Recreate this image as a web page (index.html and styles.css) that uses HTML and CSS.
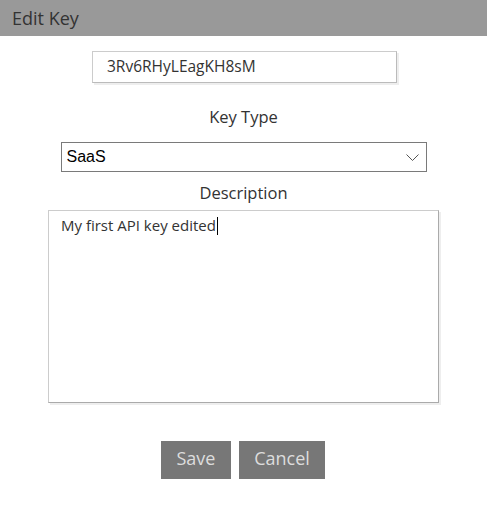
FILE: index.html
```html
<!DOCTYPE html>
<html>
<head>
<meta charset="utf-8">
<link rel="stylesheet" href="styles.css">
</head>
<body>
<div class="header"><span class="title">Edit Key</span></div>
<div class="form">
  <div class="keybox">3Rv6RHyLEagKH8sM</div>
  <div class="label label-type">Key Type</div>
  <div class="select">
    <span class="select-text">SaaS</span>
    <svg class="chev" width="13" height="7" viewBox="0 0 13 7"><path d="M0.5 0.5 L6.5 6.5 L12.5 0.5" fill="none" stroke="#555" stroke-width="1"/></svg>
  </div>
  <div class="label label-desc">Description</div>
  <div class="textarea"><span class="ta-text">My first API key edited</span><span class="caret"></span></div>
  <div class="buttons">
    <div class="btn btn-save">Save</div>
    <div class="btn btn-cancel">Cancel</div>
  </div>
</div>
</body>
</html>
```
FILE: styles.css
```css
html, body {
  margin: 0;
  padding: 0;
  background: #fff;
  font-family: "Open Sans", "Noto Sans", sans-serif;
  color: #333;
}
.header {
  height: 36px;
  background: #999;
  display: flex;
  align-items: center;
  padding-left: 12px;
}
.title {
  font-size: 18px;
  color: #333;
}
.form {
  display: flex;
  flex-direction: column;
  align-items: center;
}
.keybox {
  margin-top: 15px;
  margin-left: 2px;
  width: 305px;
  height: 32px;
  box-sizing: border-box;
  border: 1px solid #ccc;
  border-right-color: #bbb;
  border-bottom-color: #bbb;
  box-shadow: 2px 2px 0 #eee;
  font-size: 15.5px;
  line-height: 28px;
  padding-left: 14px;
}
.label {
  font-size: 16.5px;
  color: #333;
  text-align: center;
}
.label-type {
  margin-top: 23px;
  line-height: 22px;
}
.select {
  margin-top: 14px;
  width: 366px;
  height: 30px;
  box-sizing: border-box;
  border: 1px solid #7a7a7a;
  display: flex;
  align-items: center;
  justify-content: space-between;
  padding: 0 7px 0 5px;
}
.select-text {
  font-family: "Liberation Sans", Arial, sans-serif;
  font-size: 16px;
  color: #000;
}
.chev { display: block; }
.label-desc {
  margin-top: 10px;
  line-height: 22px;
}
.textarea {
  margin-top: 6px;
  width: 391px;
  height: 193px;
  box-sizing: border-box;
  border: 1px solid #ccc;
  border-right-color: #aaa;
  border-bottom-color: #aaa;
  box-shadow: 2px 2px 0 #eee;
  padding: 3px 12px;
  font-size: 15px;
  line-height: 22px;
  display: flex;
  align-items: flex-start;
}
.caret {
  display: inline-block;
  width: 1px;
  height: 18px;
  background: #000;
  margin-top: 3px;
  margin-left: 1px;
}
.buttons {
  margin-top: 38px;
  margin-right: 1px;
  display: flex;
  gap: 8px;
}
.btn {
  height: 38px;
  background: #777;
  color: #ddd;
  font-size: 18px;
  line-height: 35px;
  text-align: center;
}
.btn-save { width: 70px; }
.btn-cancel { width: 86px; }
```
